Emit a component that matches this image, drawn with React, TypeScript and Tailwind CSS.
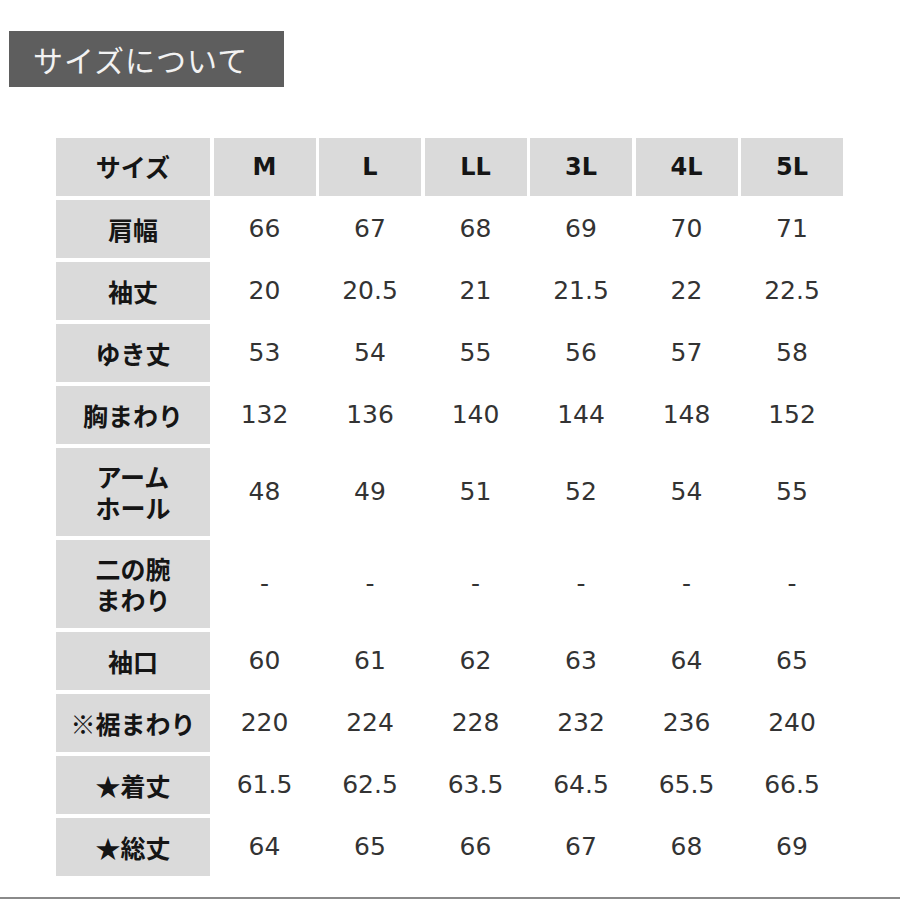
import React from 'react';

const sizes = ['M', 'L', 'LL', '3L', '4L', '5L'];

const rows: { label: string[]; values: string[]; tall?: boolean }[] = [
  { label: ['肩幅'], values: ['66', '67', '68', '69', '70', '71'] },
  { label: ['袖丈'], values: ['20', '20.5', '21', '21.5', '22', '22.5'] },
  { label: ['ゆき丈'], values: ['53', '54', '55', '56', '57', '58'] },
  { label: ['胸まわり'], values: ['132', '136', '140', '144', '148', '152'] },
  { label: ['アーム', 'ホール'], values: ['48', '49', '51', '52', '54', '55'], tall: true },
  { label: ['二の腕', 'まわり'], values: ['-', '-', '-', '-', '-', '-'], tall: true },
  { label: ['袖口'], values: ['60', '61', '62', '63', '64', '65'] },
  { label: ['※裾まわり'], values: ['220', '224', '228', '232', '236', '240'] },
  { label: ['★着丈'], values: ['61.5', '62.5', '63.5', '64.5', '65.5', '66.5'] },
  { label: ['★総丈'], values: ['64', '65', '66', '67', '68', '69'] },
];

export default function App() {
  return (
    <div className="w-[900px] h-[900px] bg-white pt-[31px] overflow-hidden">
      <div className="ml-[9px] w-[275px] h-[56px] bg-[#5e5e5e] flex items-center pl-[24px] text-[#f2f2f2] text-[30px] tracking-[1px] font-['Noto_Sans_CJK_JP','Noto_Sans',sans-serif]">
        サイズについて
      </div>

      <div className="mt-[51px] ml-[56px] grid grid-cols-[154px_repeat(6,102px)] gap-x-[3.5px] gap-y-[4px]">
        <div className="h-[58px] bg-[#dadada] flex items-center justify-center text-[25px] font-bold text-[#151515] font-['Noto_Sans_CJK_JP','Noto_Sans',sans-serif]">
          サイズ
        </div>
        {sizes.map((s) => (
          <div
            key={s}
            className="h-[58px] bg-[#dadada] flex items-center justify-center text-[24px] font-bold text-[#151515] font-['DejaVu_Sans',sans-serif]"
          >
            {s}
          </div>
        ))}

        {rows.map((row, i) => (
          <React.Fragment key={i}>
            <div
              className={`${row.tall ? 'h-[88px]' : 'h-[58px]'} bg-[#dadada] flex items-center justify-center text-center text-[25px] leading-[31px] font-bold text-[#151515] font-['Noto_Sans_CJK_JP','Noto_Sans',sans-serif]`}
            >
              <p>
                {row.label.map((l, k) => (
                  <React.Fragment key={l}>
                    {k > 0 && <br />}
                    {l}
                  </React.Fragment>
                ))}
              </p>
            </div>
            {row.values.map((v, j) => (
              <div
                key={j}
                className={`${row.tall ? 'h-[88px]' : 'h-[58px]'} flex items-center justify-center text-[25px] text-[#333333] font-['DejaVu_Sans','Noto_Sans_CJK_JP',sans-serif]`}
              >
                {v}
              </div>
            ))}
          </React.Fragment>
        ))}
      </div>

      <div className="mt-[21px] h-[2px] bg-[#8a8a8a]" />
    </div>
  );
}
